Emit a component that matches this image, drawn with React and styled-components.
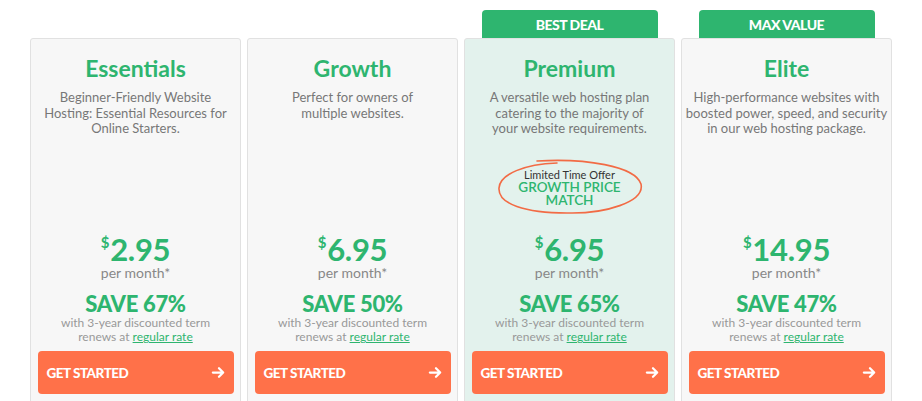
import React from "react";
import styled, { createGlobalStyle } from "styled-components";

const GlobalStyle = createGlobalStyle`
  body {
    margin: 0;
    background: #ffffff;
    font-family: Lato, "Open Sans", sans-serif;
  }
`;

const plans = [
  {
    name: "Essentials",
    desc: ["Beginner-Friendly Website", "Hosting: Essential Resources for", "Online Starters."],
    price: "2.95",
    save: "67%",
  },
  {
    name: "Growth",
    desc: ["Perfect for owners of", "multiple websites."],
    price: "6.95",
    save: "50%",
  },
  {
    name: "Premium",
    desc: ["A versatile web hosting plan", "catering to the majority of", "your website requirements."],
    price: "6.95",
    save: "65%",
    badge: "BEST DEAL",
    featured: true,
    offer: true,
  },
  {
    name: "Elite",
    desc: ["High-performance websites with", "boosted power, speed, and security", "in our web hosting package."],
    price: "14.95",
    save: "47%",
    badge: "MAX VALUE",
  },
];

export default function App() {
  return (
    <>
      <GlobalStyle />
      <Grid>
        {plans.map((p) => (
          <Column key={p.name}>
            <BadgeSlot>{p.badge && <Badge>{p.badge}</Badge>}</BadgeSlot>
            <Card $featured={p.featured}>
              <Title>{p.name}</Title>
              <Desc>
                {p.desc.map((line) => (
                  <DescLine key={line}>{line}</DescLine>
                ))}
              </Desc>
              <OfferSlot>
                {p.offer && (
                  <Offer>
                    <Scribble viewBox="0 0 150 58" fill="none">
                      <path
                        d="M42 3 C 90 0, 140 8, 146 26 C 150 44, 110 56, 72 55 C 30 55, 3 46, 4 30 C 5 16, 30 6, 62 5"
                        stroke="#f26b45"
                        strokeWidth="1.6"
                        strokeLinecap="round"
                      />
                    </Scribble>
                    <OfferLabel>Limited Time Offer</OfferLabel>
                    <OfferText>
                      GROWTH PRICE
                      <br />
                      MATCH
                    </OfferText>
                  </Offer>
                )}
              </OfferSlot>
              <Price>
                <Dollar>$</Dollar>
                {p.price}
              </Price>
              <PerMonth>per month*</PerMonth>
              <Save>SAVE {p.save}</Save>
              <Terms>
                with 3-year discounted term
                <br />
                renews at <a href="#">regular rate</a>
              </Terms>
              <Button>
                GET STARTED
                <Arrow viewBox="0 0 16 16">
                  <path
                    d="M2 8h11M8.5 3.5L13 8l-4.5 4.5"
                    stroke="#fff"
                    strokeWidth="2.4"
                    fill="none"
                    strokeLinecap="round"
                    strokeLinejoin="round"
                  />
                </Arrow>
              </Button>
            </Card>
          </Column>
        ))}
      </Grid>
    </>
  );
}

const Grid = styled.div`
  display: grid;
  grid-template-columns: repeat(4, 211px);
  gap: 6px;
  padding: 10px 30px 0;
`;

const Column = styled.div`
  display: flex;
  flex-direction: column;
`;

const BadgeSlot = styled.div`
  height: 28px;
  display: flex;
  justify-content: center;
`;

const Badge = styled.div`
  width: 176px;
  background: #2eb56f;
  color: #fff;
  border-radius: 4px 4px 0 0;
  font-weight: 900;
  font-size: 14px;
  letter-spacing: -0.5px;
  display: flex;
  align-items: center;
  justify-content: center;
`;

const Card = styled.div`
  background: ${(p) => (p.$featured ? "#e3f2ed" : "#f7f7f7")};
  border: 1px solid #e1e1e1;
  border-radius: 3px;
  padding: 14px 4px 20px;
  display: flex;
  flex-direction: column;
  align-items: center;
  text-align: center;
`;

const Title = styled.h2`
  margin: 0;
  font-size: 23px;
  line-height: 30px;
  font-weight: 700;
  color: #2eb56f;
`;

const Desc = styled.div`
  margin: 7px 0 0;
  height: 52px;
  font-size: 13px;
  line-height: 15.5px;
  color: #777;
`;

const DescLine = styled.div`
  white-space: nowrap;
`;

const OfferSlot = styled.div`
  height: 91px;
  display: flex;
  align-items: flex-start;
  justify-content: center;
  padding-top: 18px;
  box-sizing: border-box;
`;

const Offer = styled.div`
  position: relative;
  width: 146px;
  height: 56px;
  display: flex;
  flex-direction: column;
  align-items: center;
  justify-content: center;
`;

const Scribble = styled.svg`
  position: absolute;
  inset: -2px -2px 0 -2px;
  width: 150px;
  height: 58px;
`;

const OfferLabel = styled.div`
  font-size: 11px;
  line-height: 12px;
  color: #333;
`;

const OfferText = styled.div`
  font-size: 13.5px;
  line-height: 13.5px;
  font-weight: 600;
  color: #2eb56f;
`;

const Price = styled.div`
  font-size: 31px;
  line-height: 32px;
  font-weight: 700;
  color: #2eb56f;
  display: flex;
  align-items: flex-start;
  letter-spacing: -0.3px;
`;

const Dollar = styled.span`
  font-size: 15px;
  line-height: 19px;
  margin-right: 1px;
`;

const PerMonth = styled.div`
  font-size: 14px;
  line-height: 16px;
  color: #888;
`;

const Save = styled.div`
  margin-top: 11px;
  font-size: 22px;
  line-height: 24px;
  font-weight: 900;
  color: #2eb56f;
  letter-spacing: -0.3px;
`;

const Terms = styled.div`
  font-size: 12px;
  line-height: 14px;
  color: #999;

  a {
    color: #2eb56f;
    text-decoration: underline;
  }
`;

const Button = styled.button`
  margin-top: 7px;
  width: 196px;
  height: 43px;
  border: none;
  border-radius: 4px;
  background: #ff7149;
  color: #fff;
  font-family: inherit;
  font-size: 13.5px;
  font-weight: 900;
  letter-spacing: -0.5px;
  display: flex;
  align-items: center;
  justify-content: space-between;
  padding: 0 8px 0 9px;
  cursor: pointer;
`;

const Arrow = styled.svg`
  width: 15px;
  height: 15px;
`;
